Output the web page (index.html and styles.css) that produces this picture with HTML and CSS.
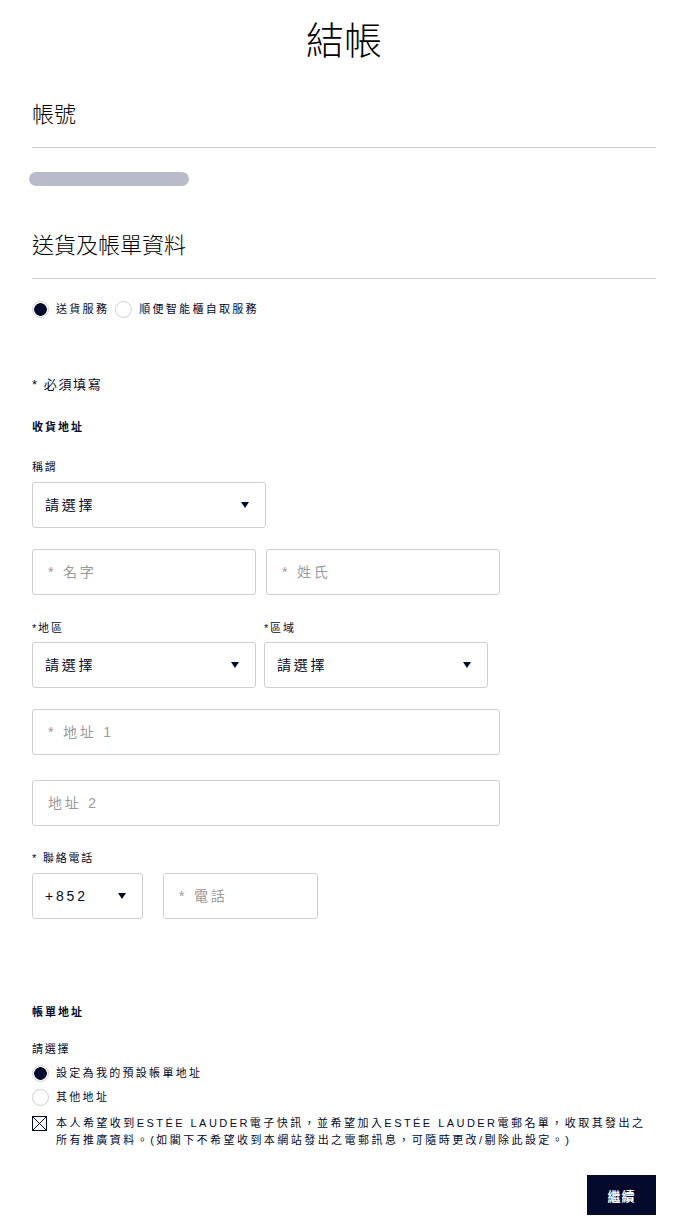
FILE: index.html
```html
<!DOCTYPE html>
<html lang="zh-Hant">

<head>
    <meta charset="UTF-8">
    <meta name="viewport" content="width=device-width, initial-scale=1.0">
    <title>結帳</title>
    <link rel="stylesheet" href="styles.css">
</head>

<body>
    <div class="checkout">
        <h1 class="page-title">結帳</h1>

        <h2 class="section-title account-title">帳號</h2>
        <div class="divider"></div>
        <div class="account-email"></div>

        <h2 class="section-title shipping-title">送貨及帳單資料</h2>
        <div class="divider"></div>

        <div class="delivery-options">
            <label class="radio">
                <input type="radio" name="delivery" checked>
                <span class="radio-dot"></span>
                <span class="radio-text">送貨服務</span>
            </label>
            <label class="radio">
                <input type="radio" name="delivery">
                <span class="radio-dot"></span>
                <span class="radio-text">順便智能櫃自取服務</span>
            </label>
        </div>

        <p class="required-note">* 必須填寫</p>
        <p class="group-title shipping-address">收貨地址</p>

        <p class="field-label title-label">稱謂</p>
        <div class="select-box w-title">
            <select>
                <option>請選擇</option>
                <option>先生</option>
                <option>女士</option>
            </select>
            <span class="caret"></span>
        </div>

        <div class="field-row name-row">
            <input class="text-box w-first" type="text" placeholder="* 名字">
            <input class="text-box w-last" type="text" placeholder="* 姓氏">
        </div>

        <div class="field-row region-row">
            <div class="field">
                <p class="field-label">*地區</p>
                <div class="select-box w-region">
                    <select>
                        <option>請選擇</option>
                    </select>
                    <span class="caret"></span>
                </div>
            </div>
            <div class="field">
                <p class="field-label">*區域</p>
                <div class="select-box w-region">
                    <select>
                        <option>請選擇</option>
                    </select>
                    <span class="caret"></span>
                </div>
            </div>
        </div>

        <input class="text-box w-full address-1" type="text" placeholder="* 地址 1">
        <input class="text-box w-full address-2" type="text" placeholder="地址 2">

        <p class="field-label phone-label">* 聯絡電話</p>
        <div class="field-row phone-row">
            <div class="select-box w-code">
                <select>
                    <option>+852</option>
                    <option>+853</option>
                </select>
                <span class="caret"></span>
            </div>
            <input class="text-box w-phone" type="tel" placeholder="* 電話">
        </div>

        <p class="group-title billing-address">帳單地址</p>
        <p class="field-label billing-choose">請選擇</p>

        <label class="radio billing-default">
            <input type="radio" name="billing" checked>
            <span class="radio-dot"></span>
            <span class="radio-text">設定為我的預設帳單地址</span>
        </label>
        <label class="radio billing-other">
            <input type="radio" name="billing">
            <span class="radio-dot"></span>
            <span class="radio-text">其他地址</span>
        </label>

        <label class="newsletter">
            <svg class="check-x" width="15" height="15" viewBox="0 0 15 15">
                <rect x="0.5" y="0.5" width="14" height="14" fill="none" stroke="#040a2b" stroke-width="1"/>
                <path d="M1 1 L14 14 M14 1 L1 14" stroke="#040a2b" stroke-width="1"/>
            </svg>
            <span class="newsletter-text">本人希望收到ESTÉE LAUDER電子快訊，並希望加入ESTÉE LAUDER電郵名單，收取其發出之所有推廣資料。(如閣下不希望收到本網站發出之電郵訊息，可隨時更改/剔除此設定。)</span>
        </label>

        <div class="actions">
            <button class="continue-btn">繼續</button>
        </div>
    </div>
</body>

</html>
```

FILE: styles.css
```css
body {
    margin: 0;
    padding: 0;
    background: #fff;
    color: #040a2b;
    font-family: "Liberation Sans", "Noto Sans CJK TC", sans-serif;
}

p {
    margin: 0;
}

.checkout {
    width: 624px;
    padding: 0 21px 12px 32px;
}

.page-title {
    margin: 15px 0 0;
    font-family: "Noto Sans CJK TC", sans-serif;
    font-size: 38px;
    font-weight: 300;
    line-height: 46px;
    text-align: center;
    color: #000;
}

.section-title {
    margin: 0;
    font-family: "Noto Sans CJK TC", sans-serif;
    font-size: 22px;
    font-weight: 300;
    line-height: 30px;
    color: #000;
}

.account-title {
    margin-top: 36px;
}

.shipping-title {
    margin-top: 42px;
}

.divider {
    margin-top: 20px;
    border-top: 1px solid #cfcfcf;
}

/* email is masked out */
.account-email {
    margin-top: 24px;
    margin-left: -3px;
    width: 160px;
    height: 14px;
    border-radius: 7px;
    background: #babbc8;
}

/* radios */
.delivery-options {
    display: flex;
    gap: 6px;
    margin-top: 22px;
}

.radio {
    display: flex;
    align-items: center;
    height: 16px;
    cursor: pointer;
}

.radio input {
    display: none;
}

.radio-dot {
    box-sizing: border-box;
    width: 17px;
    height: 17px;
    border: 1px solid #cfcfcf;
    border-radius: 50%;
    background: #fff;
    flex-shrink: 0;
}

.radio input:checked + .radio-dot {
    background: radial-gradient(circle, #040a2b 0, #040a2b 6px, #fff 6.6px);
}

.radio-text {
    margin-left: 7px;
    font-size: 11px;
    letter-spacing: 2.3px;
    line-height: 16px;
}

.required-note {
    margin-top: 58px;
    font-size: 13px;
    letter-spacing: 1.6px;
    line-height: 20px;
}

.group-title {
    font-size: 11px;
    font-weight: bold;
    letter-spacing: 2px;
    line-height: 20px;
}

.shipping-address {
    margin-top: 22px;
}

.field-label {
    font-size: 11px;
    letter-spacing: 1.8px;
    line-height: 20px;
}

.title-label {
    margin-top: 20px;
}

/* selects and inputs */
.select-box {
    box-sizing: border-box;
    display: flex;
    align-items: center;
    height: 46px;
    border: 1px solid #cfcfcf;
    border-radius: 3px;
    background: #fff;
    padding-right: 16px;
}

.title-label + .select-box {
    margin-top: 5px;
}

.select-box select {
    flex: 1;
    min-width: 0;
    height: 100%;
    border: none;
    outline: none;
    background: transparent;
    -webkit-appearance: none;
    appearance: none;
    padding: 0 0 0 12px;
    font-family: "Liberation Sans", "Noto Sans CJK TC", sans-serif;
    font-size: 14px;
    letter-spacing: 2.8px;
    color: #040a2b;
}

.caret {
    width: 0;
    height: 0;
    border-left: 4px solid transparent;
    border-right: 4px solid transparent;
    border-top: 6px solid #040a2b;
}

.text-box {
    box-sizing: border-box;
    height: 46px;
    border: 1px solid #cfcfcf;
    border-radius: 3px;
    padding: 0 15px;
    outline: none;
    font-family: "Liberation Sans", "Noto Sans CJK TC", sans-serif;
    font-size: 14px;
    letter-spacing: 2.8px;
    color: #040a2b;
    display: block;
}

.text-box::placeholder {
    color: #9a9a9a;
}

.field-row {
    display: flex;
}

.name-row {
    margin-top: 21px;
    gap: 10px;
}

.region-row {
    margin-top: 23px;
    gap: 8px;
}

.region-row .field-label {
    margin-bottom: 4px;
}

.phone-row {
    margin-top: 5px;
    gap: 20px;
}

.w-title { width: 234px; }
.w-first { width: 224px; }
.w-last { width: 234px; }
.w-region { width: 224px; }
.w-full { width: 468px; }
.w-code { width: 111px; }
.w-phone { width: 155px; }

.address-1 {
    margin-top: 21px;
}

.address-2 {
    margin-top: 25px;
}

.phone-label {
    margin-top: 22px;
}

/* billing */
.billing-address {
    margin-top: 83px;
}

.billing-choose {
    margin-top: 17px;
}

.billing-default {
    margin-top: 6px;
}

.billing-other {
    margin-top: 8px;
}

.newsletter {
    display: flex;
    align-items: flex-start;
    margin-top: 10px;
    cursor: pointer;
}

.check-x {
    flex-shrink: 0;
    margin-top: 1px;
}

.newsletter-text {
    max-width: 595px;
    margin-left: 9px;
    font-size: 11px;
    letter-spacing: 2.45px;
    line-height: 17px;
}

.actions {
    display: flex;
    justify-content: flex-end;
    margin-top: 26px;
}

.continue-btn {
    width: 69px;
    height: 40px;
    border: none;
    background: #040a2b;
    color: #fff;
    font-family: "Noto Sans CJK TC", sans-serif;
    font-size: 13px;
    font-weight: bold;
    letter-spacing: 1px;
    cursor: pointer;
}
```
